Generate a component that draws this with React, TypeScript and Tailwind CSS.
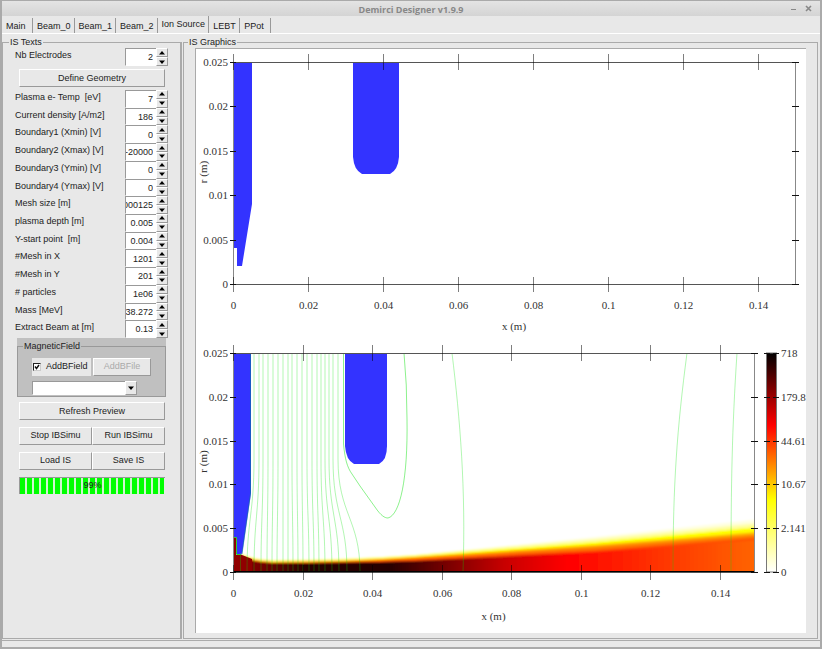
import React, { useState } from "react";

const tabs = ["Main", "Beam_0", "Beam_1", "Beam_2", "Ion Source", "LEBT", "PPot"];

const fields = [
  { id: "temp", label: "Plasma e- Temp  [eV]", value: "7" },
  { id: "current", label: "Current density [A/m2]", value: "186" },
  { id: "xmin", label: "Boundary1 (Xmin) [V]", value: "0" },
  { id: "xmax", label: "Boundary2 (Xmax) [V]", value: "-20000" },
  { id: "ymin", label: "Boundary3 (Ymin) [V]", value: "0" },
  { id: "ymax", label: "Boundary4 (Ymax) [V]", value: "0" },
  { id: "mesh", label: "Mesh size [m]", value: "0.000125" },
  { id: "depth", label: "plasma depth [m]", value: "0.005" },
  { id: "ystart", label: "Y-start point  [m]", value: "0.004" },
  { id: "meshx", label: "#Mesh in X", value: "1201" },
  { id: "meshy", label: "#Mesh in Y", value: "201" },
  { id: "particles", label: "# particles", value: "1e06" },
  { id: "mass", label: "Mass [MeV]", value: "938.272" },
  { id: "extract", label: "Extract Beam at [m]", value: "0.13" },
];

const xLabels = ["0", "0.02", "0.04", "0.06", "0.08", "0.1", "0.12", "0.14"];
const yLabels = ["0.025", "0.02", "0.015", "0.01", "0.005", "0"];
const scaleLabels = ["718", "179.8", "44.61", "10.67", "2.141", "0"];

// Equipotential lines between the two electrodes: top x, bottom x
const fieldLines = [
  [59, 52], [64, 59], [68, 66], [73, 72], [78, 77], [83, 82], [88, 88],
  [93, 93], [97, 98], [102, 103], [107, 108], [112, 114], [117, 119],
  [122, 124], [126, 130], [130, 137], [134, 144], [138, 152], [143, 165],
];

const raised =
  "border border-t-white border-l-white border-r-[#999] border-b-[#999] bg-[#e8e8e8]";
const sunken =
  "border border-t-[#999] border-l-[#999] border-r-white border-b-white bg-white";

const SpinBox = ({ id, label, value }: { id: string; label: string; value: string }) => {
  const [text, setText] = useState(value);
  const step = (by: number) => setText(String(Number(text) + by));

  return (
    <div className="flex min-h-[17px] flex-1 justify-between">
      <label htmlFor={id} className="whitespace-pre pt-[1px] leading-[12px]">
        {label}
      </label>
      <div className="flex w-[43px] shrink-0">
        <div className={`${sunken} flex min-w-0 flex-1 justify-end overflow-hidden border-r-0`}>
          <input
            id={id}
            value={text}
            onChange={(e) => setText(e.target.value)}
            className="w-[48px] shrink-0 bg-transparent pt-[2px] pr-[3px] text-right outline-none"
          />
        </div>
        <div className="flex w-[12px] flex-col">
          <button
            aria-label={`Increase ${label}`}
            onClick={() => step(1)}
            className={`${raised} flex flex-1 items-center justify-center`}
          >
            <svg viewBox="0 0 6 4" className="h-[4px] w-[6px]">
              <path d="M3 0L6 3.5H0Z" />
            </svg>
          </button>
          <button
            aria-label={`Decrease ${label}`}
            onClick={() => step(-1)}
            className={`${raised} flex flex-1 items-center justify-center`}
          >
            <svg viewBox="0 0 6 4" className="h-[4px] w-[6px]">
              <path d="M0 0.5H6L3 4Z" />
            </svg>
          </button>
        </div>
      </div>
    </div>
  );
};

const Axes = ({
  right,
  step,
  height,
  titleGap,
}: {
  right: number;
  step: number;
  height: number;
  titleGap: number;
}) => {
  const bottom = 14 + height;
  return (
    <g>
      <path d={`M38.5 14V${bottom}M${right}.5 14V${bottom}`} stroke="#888" fill="none" />
      <path d={`M35 14.5H${right + 4}M35 ${bottom}.5H${right + 4}`} stroke="#555" />
      {xLabels.map((label, i) => {
        const x = Math.round(38 + i * step) + 0.5;
        return (
          <g key={label}>
            <path d={`M${x} 6V22M${x} ${bottom - 7}V${bottom + 8}`} stroke="#000" strokeOpacity="0.5" />
            <text x={x} y={bottom + 25} textAnchor="middle">
              {label}
            </text>
          </g>
        );
      })}
      {yLabels.map((label, i) => {
        const y = Math.round(14 + (i * height) / 5) + 0.5;
        return (
          <g key={label}>
            <path d={`M35 ${y}H41M${right - 3} ${y}H${right + 4}`} stroke="#111" />
            <text x="33" y={y + 3} textAnchor="end">
              {label}
            </text>
          </g>
        );
      })}
      <text x={(38 + right) / 2} y={bottom + titleGap} textAnchor="middle">
        x (m)
      </text>
      <text transform={`translate(12 ${13 + height / 2}) rotate(-90)`} textAnchor="middle">
        r (m)
      </text>
    </g>
  );
};

const GeometryPlot = () => (
  <svg
    viewBox="1 1 610 290"
    className="block w-full fill-[#333] font-['Liberation_Serif',serif] text-[11px]"
  >
    <path d="M38 14H57V156L47 218H42V200H38Z" fill="#33f" />
    <path d="M158 14H204V109Q203 122 195 126H167Q159 122 158 109Z" fill="#33f" />
    <Axes right={600} step={75} height={222} titleGap={46} />
  </svg>
);

const BeamPlot = () => (
  <svg
    viewBox="1 0 610 294"
    className="block w-full fill-[#333] font-['Liberation_Serif',serif] text-[11px]"
  >
    <defs>
      {/* colour along the beam axis */}
      <linearGradient id="core" x1="38" x2="560" y1="0" y2="0" gradientUnits="userSpaceOnUse">
        <stop offset="0" stopColor="#900000" />
        <stop offset="0.05" stopColor="#780000" />
        <stop offset="0.14" stopColor="#280000" />
        <stop offset="0.3" stopColor="#280000" />
        <stop offset="0.42" stopColor="#800000" />
        <stop offset="0.52" stopColor="#c80000" />
        <stop offset="0.64" stopColor="#ff0000" />
        <stop offset="0.83" stopColor="#ff3800" />
        <stop offset="1" stopColor="#ff6400" />
      </linearGradient>
      <linearGradient id="scale" x1="0" x2="0" y1="0" y2="1">
        <stop offset="0" stopColor="#000" />
        <stop offset="0.33" stopColor="#f00" />
        <stop offset="0.67" stopColor="#ff0" />
        <stop offset="1" stopColor="#fff" />
      </linearGradient>
      <filter id="soft" x="-5%" y="-50%" width="110%" height="200%">
        <feGaussianBlur stdDeviation="0 1" />
      </filter>
      <clipPath id="frame">
        <path d="M38 14H560V233H38Z" />
      </clipPath>
    </defs>

    <path d="M38 14H56V154L47 216H42V200H38Z" fill="#33f" />
    <path d="M150 14H192V107Q192 121 184 125H159Q151 121 150 107Z" fill="#33f" />

    <g clipPath="url(#frame)">
      <g filter="url(#soft)">
        <path d="M47 215Q57 220 77 221Q150 221 220 216L400 198L575 179V245H40V222Z" fill="#ffffe0" />
        <path d="M47 215Q57 220 77 221Q150 221 220 216L400 200L575 183V245H40V222Z" fill="#ffffa0" />
        <path d="M47 216Q57 221 77 222Q150 222 220 217L400 203L575 187V245H40V222Z" fill="#ffff00" />
        <path d="M47 217Q57 222 77 223Q150 223 220 218L400 206L575 192V245H40V222Z" fill="#ffb000" />
        <path d="M47 217Q57 222 77 223Q150 223 220 219L400 208L575 195V245H40V222Z" fill="#ff7800" />
        <path d="M47 218Q57 223 77 224Q150 224 220 220L400 211L575 198V245H40V222Z" fill="#ff3000" fillOpacity="0.6" />
        <path d="M47 218Q57 223 77 224Q150 224 220 222L400 213L575 200V245H40V222Z" fill="url(#core)" />
      </g>
      <path d="M38 198H41V216H47L57 220V234H38Z" fill="#900000" />
    </g>

    <g fill="none" stroke="#00e000" strokeOpacity="0.3">
      {fieldLines.map(([top, end]) => (
        <path key={top} d={`M${top} 14V120C${top} 175 ${end} 180 ${end} 233`} />
      ))}
      <path d="M45.5 216V233" />
      <path
        d="M148.5 14V105C150 120 152 128 157 135L165 147L180 168C186 177 190 179 193 179C205 176 213 140 212 80Q212 45 209 14"
        strokeOpacity="0.45"
      />
      <path d="M257 14C265 80 271 150 268 233" />
      <path d="M492 14C482 90 478 145 478 233" />
      <path d="M542 14C537 90 536 145 536 233" />
    </g>
    <path d="M38 198.5H41.5V215.5H46" stroke="#3c3" fill="none" />
    <path d="M47 215L55.5 155V14" stroke="#088" strokeOpacity="0.5" fill="none" />
    <path d="M38 233H560" stroke="#000" strokeWidth="2" />

    <Axes right={559} step={69.5} height={219} titleGap={48} />

    <rect x="571.5" y="14" width="10" height="219" fill="url(#scale)" stroke="#777" />
    {scaleLabels.map((label, i) => {
      const y = Math.round(14 + (i * 219) / 5) + 0.5;
      return (
        <g key={label}>
          <path d={`M569 ${y}H575M578 ${y}H584`} stroke="#111" />
          <text x="586" y={y + 3}>
            {label}
          </text>
        </g>
      );
    })}
  </svg>
);

const App = () => {
  const [active, setActive] = useState("Ion Source");
  const [addField, setAddField] = useState(true);
  const progress = 99;

  return (
    <div className="flex min-h-screen flex-col border-x-2 border-t border-[#aaa] bg-[#e8e8e8] font-['Liberation_Sans',Arial,sans-serif] text-[9px] text-[#222]">
      {/* Title bar */}
      <header className="flex h-[15px] items-center bg-gradient-to-b from-[#e4e4e4] to-[#d4d4d4]">
        <div className="w-[30px]" />
        <h1 className="flex-1 pt-[1px] text-center font-['Open_Sans',sans-serif] text-[9px] leading-[13px] font-bold text-[#888]">
          Demirci Designer v1.9.9
        </h1>
        <div className="flex w-[30px] items-center gap-[8px]">
          <button aria-label="Minimize">
            <svg viewBox="0 0 7 7" className="size-[7px]">
              <path d="M1 4.5H6" stroke="#888" />
            </svg>
          </button>
          <button aria-label="Close">
            <svg viewBox="0 0 7 7" className="size-[7px]">
              <path d="M1 1L6 6M6 1L1 6" stroke="#888" strokeWidth="1.6" />
            </svg>
          </button>
        </div>
      </header>

      {/* Tabs */}
      <nav className="flex h-[18px] items-end border-b border-white">
        {tabs.map((tab) => (
          <button
            key={tab}
            onClick={() => setActive(tab)}
            className={`min-w-[31px] border-r border-[#999] pr-[3px] pl-[4px] text-left ${
              tab === active ? "h-[17px] pt-[1px]" : "h-[15px] pt-[2px]"
            }`}
          >
            {tab}
          </button>
        ))}
      </nav>

      <main className="flex flex-1 gap-[1px] border-b border-[#aaa] pt-[2px] pr-[2px] pb-[1px]">
        <fieldset className="w-[180px] shrink-0 border border-r-2 border-[#aaa] px-[12px]">
          <legend className="-ml-[6px] px-[1px] leading-[12px]">IS Texts</legend>

          <div className="flex h-[18px] flex-col">
            <SpinBox id="electrodes" label="Nb Electrodes" value="2" />
          </div>
          <button className={`${raised} my-[3px] ml-[4px] h-[18px] w-[146px] pt-[1px]`}>
            Define Geometry
          </button>
          <div className="flex h-[248px] flex-col">
            {fields.map((field) => (
              <SpinBox key={field.id} {...field} />
            ))}
          </div>

          <div className="ml-[2px] w-[149px] bg-[#c0c0c0] pt-[2px]">
            <fieldset className="border border-[#999] px-[14px] pb-[1px]">
              <legend className="-ml-[9px] px-[1px] leading-[12px]">MagneticField</legend>
              <div className="mt-[6px] flex">
                <label className="relative flex h-[18px] w-[59px] items-center gap-[5px] bg-[#e8e8e8] pl-[1px]">
                  <input
                    type="checkbox"
                    checked={addField}
                    onChange={(e) => setAddField(e.target.checked)}
                    className="size-[8px] appearance-none border border-[#222] border-r-[#ccc] border-b-[#ccc] bg-white"
                  />
                  {addField && (
                    <svg viewBox="0 0 6 6" className="absolute left-[2px] size-[6px]">
                      <path d="M1 2.5L2.5 4.5L5 1" fill="none" stroke="#111" strokeWidth="1.4" />
                    </svg>
                  )}
                  AddBField
                </label>
                <button disabled className={`${raised} ml-[2px] h-[18px] w-[58px] text-[#aaa]`}>
                  AddBFile
                </button>
              </div>
              <div className="relative mt-[5px] h-[14px] w-[105px]">
                <select
                  aria-label="Field file"
                  className={`${sunken} block h-[14px] w-full appearance-none`}
                >
                  <option></option>
                </select>
                <span
                  className={`${raised} pointer-events-none absolute inset-y-0 right-0 flex w-[12px] items-center justify-center`}
                >
                  <svg viewBox="0 0 6 4" className="h-[4px] w-[6px]">
                    <path d="M0 0.5H6L3 4Z" />
                  </svg>
                </span>
              </div>
            </fieldset>
          </div>

          <div className="mt-[5px] ml-[4px] flex w-[146px] flex-col gap-[7px]">
            <button className={`${raised} h-[18px] pt-[1px]`}>Refresh Preview</button>
            <div className="grid grid-cols-2">
              <button className={`${raised} h-[18px]`}>Stop IBSimu</button>
              <button className={`${raised} h-[18px]`}>Run IBSimu</button>
            </div>
            <div className="grid grid-cols-2">
              <button className={`${raised} h-[18px]`}>Load IS</button>
              <button className={`${raised} h-[18px]`}>Save IS</button>
            </div>
            <div
              role="progressbar"
              aria-label="Simulation progress"
              aria-valuenow={progress}
              className="relative h-[17px] border-t border-l border-[#999] bg-[#e8e8e8]"
            >
              <div
                className="h-full bg-[repeating-linear-gradient(90deg,#00ff00_0px,#00ff00_5px,#d0f4d0_5px,#d0f4d0_7px)]"
                style={{ width: `${progress}%` }}
              />
              <span className="absolute inset-0 flex items-center justify-center">
                {progress}%
              </span>
            </div>
          </div>
        </fieldset>

        <fieldset className="min-w-0 flex-1 border border-[#aaa] px-[11px]">
          <legend className="-ml-[7px] px-[1px] leading-[12px]">IS Graphics</legend>
          <div className="border-t border-l border-[#aaa] bg-white">
            <GeometryPlot />
            <BeamPlot />
          </div>
        </fieldset>
      </main>
      <footer className="h-[8px] border-b-2 border-[#aaa]" />
    </div>
  );
};

export default App;
